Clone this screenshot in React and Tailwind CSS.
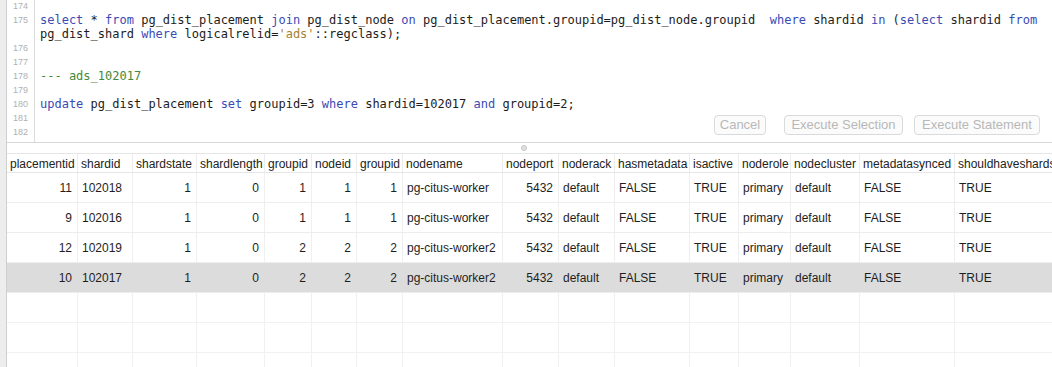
import React from "react";

const KW = "text-[#3a4bb5]";
const STR = "text-[#a5822f]";
const CMT = "text-[#3f8a3c]";

const columns = [
  { name: "placementid", w: "w-[71px]", num: true },
  { name: "shardid", w: "w-[55px]" },
  { name: "shardstate", w: "w-[64px]", num: true },
  { name: "shardlength", w: "w-[68px]", num: true },
  { name: "groupid", w: "w-[47px]", num: true },
  { name: "nodeid", w: "w-[45px]", num: true },
  { name: "groupid", w: "w-[46px]", num: true },
  { name: "nodename", w: "w-[100px]" },
  { name: "nodeport", w: "w-[56px]", num: true },
  { name: "noderack", w: "w-[56px]" },
  { name: "hasmetadata", w: "w-[75px]" },
  { name: "isactive", w: "w-[49px]" },
  { name: "noderole", w: "w-[52px]" },
  { name: "nodecluster", w: "w-[69px]" },
  { name: "metadatasynced", w: "w-[95px]" },
  { name: "shouldhaveshards", w: "w-[110px]" },
];

const rows = [
  ["11", "102018", "1", "0", "1", "1", "1", "pg-citus-worker", "5432", "default", "FALSE", "TRUE", "primary", "default", "FALSE", "TRUE"],
  ["9", "102016", "1", "0", "1", "1", "1", "pg-citus-worker", "5432", "default", "FALSE", "TRUE", "primary", "default", "FALSE", "TRUE"],
  ["12", "102019", "1", "0", "2", "2", "2", "pg-citus-worker2", "5432", "default", "FALSE", "TRUE", "primary", "default", "FALSE", "TRUE"],
  ["10", "102017", "1", "0", "2", "2", "2", "pg-citus-worker2", "5432", "default", "FALSE", "TRUE", "primary", "default", "FALSE", "TRUE"],
];

// code lines: [line number or "", content]
const codeLines = [
  ["174", null],
  [
    "175",
    <>
      <span className={KW}>select</span> * <span className={KW}>from</span> pg_dist_placement{" "}
      <span className={KW}>join</span> pg_dist_node <span className={KW}>on</span>{" "}
      pg_dist_placement.groupid=pg_dist_node.groupid{"  "}
      <span className={KW}>where</span> shardid <span className={KW}>in</span> (
      <span className={KW}>select</span> shardid <span className={KW}>from</span>
    </>,
  ],
  [
    "",
    <>
      pg_dist_shard <span className={KW}>where</span> logicalrelid=
      <span className={STR}>'ads'</span>::regclass);
    </>,
  ],
  ["176", null],
  ["177", null],
  ["178", <span className={CMT}>--- ads_102017</span>],
  ["179", null],
  [
    "180",
    <>
      <span className={KW}>update</span> pg_dist_placement <span className={KW}>set</span> groupid=3{" "}
      <span className={KW}>where</span> shardid=102017 <span className={KW}>and</span> groupid=2;
    </>,
  ],
  ["181", null],
  ["182", null],
];

const Button = ({ label, className }) => (
  <div
    className={`h-[20px] flex items-center justify-center whitespace-nowrap rounded-[4px] border border-[#dadada] bg-[#fbfbfb] text-[13px] text-[#b8b8b8] ${className || ""}`}
  >
    {label}
  </div>
);

const Editor = () => (
  <div className="relative h-[143px] overflow-hidden border-b border-[#d6d6d6] bg-white">
    <div className="-mt-[1px]">
      {codeLines.map(([num, content], i) => (
        <div key={i} className="flex h-[14px] items-center">
          <div className="w-[28px] shrink-0 h-full border-r border-[#dcdcdc] pr-[6px] text-right text-[9px] leading-[14px] text-[#b0b0b0]">
            {num}
          </div>
          <div className="pl-[5px] whitespace-pre text-[12px] leading-[14px] text-[#1c1c1c] font-['DejaVu_Sans_Mono',monospace]">
            {content}
          </div>
        </div>
      ))}
      <div className="flex h-[14px]">
        <div className="w-[28px] shrink-0 h-full border-r border-[#dcdcdc]" />
      </div>
    </div>
    <div className="absolute right-[12px] bottom-[7px] flex">
      <Button label="Cancel" className="w-[52px]" />
      <Button label="Execute Selection" className="ml-[18px] w-[119px]" />
      <Button label="Execute Statement" className="ml-[11px] w-[126px]" />
    </div>
  </div>
);

const Results = () => (
  <div className="flex-1 overflow-hidden">
    <div className="h-[10px] flex justify-center items-center">
      <div className="ml-[-12px] w-[6px] h-[6px] rounded-full border border-[#c4c4c4] bg-[#e2e2e2]" />
    </div>
    <div className="flex h-[20px] border-y border-[#e6e6e6] bg-white">
      {columns.map((c, i) => (
        <div
          key={i}
          className={`${c.w} shrink-0 pl-[3px] pt-[3px] border-r border-[#ececec] text-[12px] leading-[15px] text-[#222] whitespace-nowrap overflow-hidden`}
        >
          {c.name}
        </div>
      ))}
    </div>
    {rows.map((r, ri) => (
      <div
        key={ri}
        className={`flex h-[30px] border-b border-[#ededed] ${ri === 3 ? "bg-[#dcdcdc]" : "bg-white"}`}
      >
        {r.map((v, ci) => (
          <div
            key={ci}
            className={`${columns[ci].w} shrink-0 flex items-center border-r ${ri === 3 ? "border-[#dcdcdc]" : "border-[#efefef]"} text-[12px] text-[#1e1e1e] whitespace-nowrap ${columns[ci].num ? "justify-end pr-[5px]" : "pl-[4px]"}`}
          >
            {v}
          </div>
        ))}
      </div>
    ))}
    {[0, 1, 2].map((k) => (
      <div key={k} className="flex h-[30px] border-b border-[#f1f1f1]">
        {columns.map((c, ci) => (
          <div key={ci} className={`${c.w} shrink-0 border-r border-[#f1f1f1]`} />
        ))}
      </div>
    ))}
  </div>
);

const App = () => {
  return (
    <div className="w-[1052px] h-[367px] flex overflow-hidden bg-white font-['Liberation_Sans',Arial,sans-serif]">
      <div className="w-[7px] shrink-0 bg-[#ededed] border-r border-[#cfcfcf]" />
      <div className="flex-1 flex flex-col min-w-0">
        <Editor />
        <Results />
      </div>
    </div>
  );
};

export default App;
